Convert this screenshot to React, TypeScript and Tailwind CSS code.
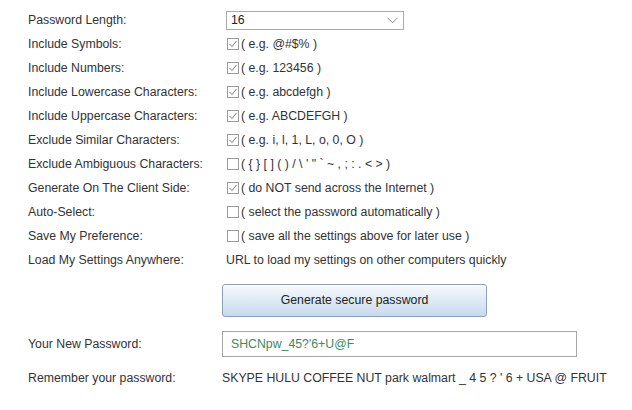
import React from "react";

const Check = ({ checked }: { checked: boolean }) => (
  <span className="inline-flex items-center justify-center w-[12px] h-[12px] border border-[#9a9a9a] bg-white ml-[5px] mr-[2px] shrink-0">
    {checked && (
      <svg width="10" height="10" viewBox="0 0 10 10" fill="none">
        <path d="M1.5 5 L4 7.6 L8.6 1.8" stroke="#7d7d7d" strokeWidth="1" fill="none" />
      </svg>
    )}
  </span>
);

const rows: { label: string; checked?: boolean; text: string }[] = [
  { label: "Include Symbols:", checked: true, text: "( e.g. @#$% )" },
  { label: "Include Numbers:", checked: true, text: "( e.g. 123456 )" },
  { label: "Include Lowercase Characters:", checked: true, text: "( e.g. abcdefgh )" },
  { label: "Include Uppercase Characters:", checked: true, text: "( e.g. ABCDEFGH )" },
  { label: "Exclude Similar Characters:", checked: true, text: "( e.g. i, l, 1, L, o, 0, O )" },
  { label: "Exclude Ambiguous Characters:", checked: false, text: "( { } [ ] ( ) / \\ ' \" ` ~ , ; : . < > )" },
  { label: "Generate On The Client Side:", checked: true, text: "( do NOT send across the Internet )" },
  { label: "Auto-Select:", checked: false, text: "( select the password automatically )" },
  { label: "Save My Preference:", checked: false, text: "( save all the settings above for later use )" },
];

export default function App() {
  return (
    <div
      className="w-[632px] h-[410px] bg-white text-[#333] text-[12.3px] overflow-hidden pt-[8px]"
      style={{ fontFamily: '"Liberation Sans", Arial, sans-serif' }}
    >
      <div className="flex items-center h-[24px]">
        <div className="w-[222px] pl-[28px]">Password Length:</div>
        <div className="ml-[4px] w-[178px] h-[19px] border border-[#a9a9a9] flex items-center justify-between pl-[4px] pr-[5px]">
          <span className="text-[#222]">16</span>
          <svg width="11" height="7" viewBox="0 0 11 7" fill="none">
            <path d="M0.5 0.8 L5.5 5.8 L10.5 0.8" stroke="#8a8a8a" strokeWidth="1" />
          </svg>
        </div>
      </div>
      {rows.map((r) => (
        <div key={r.label} className="flex items-center h-[24px]">
          <div className="w-[222px] pl-[28px]">{r.label}</div>
          <Check checked={!!r.checked} />
          <span className="whitespace-pre">{r.text}</span>
        </div>
      ))}
      <div className="flex items-center h-[24px]">
        <div className="w-[222px] pl-[28px]">Load My Settings Anywhere:</div>
        <span className="ml-[4px]">URL to load my settings on other computers quickly</span>
      </div>
      <div className="flex mt-[12px]">
        <div className="w-[222px]" />
        <button className="w-[265px] h-[33px] rounded-[3px] border border-[#8ea0b6] bg-gradient-to-b from-[#f7fafd] to-[#c6daee] text-[#222] text-[12.3px] shadow-[inset_0_1px_0_#ffffff]">
          Generate secure password
        </button>
      </div>
      <div className="flex items-center mt-[14px]">
        <div className="w-[222px] pl-[28px]">Your New Password:</div>
        <div className="w-[355px] h-[26px] border border-[#a6a6a6] flex items-center pl-[8px] text-[#3d8a5c]">
          SHCNpw_45?'6+U@F
        </div>
      </div>
      <div className="flex items-center h-[24px] mt-[9px]">
        <div className="w-[222px] pl-[28px]">Remember your password:</div>
        <span>SKYPE HULU COFFEE NUT park walmart _ 4 5 ? ' 6 + USA @ FRUIT</span>
      </div>
    </div>
  );
}
